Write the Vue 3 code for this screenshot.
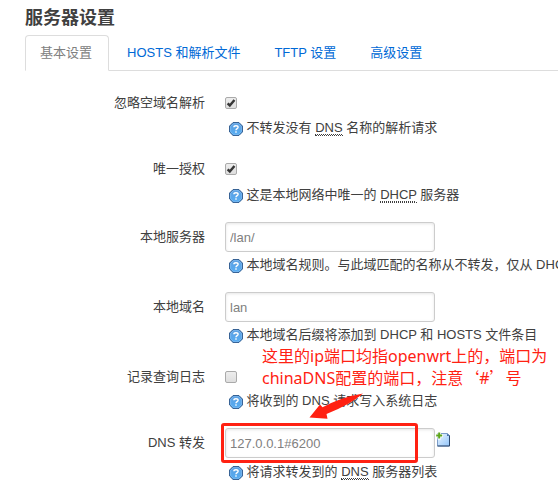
<script setup>
const tabs = ['基本设置', 'HOSTS 和解析文件', 'TFTP 设置', '高级设置']
const rows = [
  { id: 'strip', label: '忽略空域名解析', type: 'check', checked: true, hint: [['不转发没有 '], ['DNS', true], [' 名称的解析请求']] },
  { id: 'auth', label: '唯一授权', type: 'check', checked: true, hint: [['这是本地网络中唯一的 '], ['DHCP', true], [' 服务器']] },
  { id: 'server', label: '本地服务器', type: 'text', value: '/lan/', hint: [['本地域名规则。与此域匹配的名称从不转发，仅从 DHCP']] },
  { id: 'domain', label: '本地域名', type: 'text', value: 'lan', hint: [['本地域名后缀将添加到 DHCP 和 HOSTS 文件条目']] },
  { id: 'log', label: '记录查询日志', type: 'check', checked: false, hint: [['将收到的 DNS 请求写入系统日志']] },
  { id: 'forward', label: 'DNS 转发', type: 'text', value: '127.0.0.1#6200', add: true, hint: [['将请求转发到的 '], ['DNS', true], [' 服务器列表']] },
]
</script>

<template>
  <main class="page">
    <h2 class="title">服务器设置</h2>
    <nav class="tabs">
      <a v-for="(t, i) in tabs" :key="t" class="tab" :class="{ active: i === 0 }">{{ t }}</a>
    </nav>
    <section class="form">
      <div v-for="r in rows" :key="r.id" class="row" :class="r.id">
        <label class="label">{{ r.label }}</label>
        <div class="field">
          <div class="control">
            <span v-if="r.type === 'check'" class="check">
              <svg v-if="r.checked" width="10" height="10" viewBox="0 0 11 11"><path d="M1.8 5.8 4.2 8.2 9.3 2.2" fill="none" stroke="#363636" stroke-width="2.7" /></svg>
            </span>
            <input v-else class="input" type="text" :value="r.value" />
            <svg v-if="r.add" class="add" width="16" height="16" viewBox="0 0 16 16">
              <defs><linearGradient id="paper" x1="0" y1="0" x2="1" y2="1"><stop offset="0" stop-color="#edf6ff" /><stop offset="1" stop-color="#92c5fa" /></linearGradient></defs>
              <path d="M1.5 1.5H11.5L13.5 3.5V14H1.5Z" fill="url(#paper)" stroke="#7b9cc8" />
              <path d="M13.5 3.5V14H1.5" fill="none" stroke="#2d486e" />
              <path d="M11 1.5V4H13.5Z" fill="#4c74a8" />
              <path d="M3.3 0V7.5M0 3.6H7" stroke="#fff" stroke-width="3.4" />
              <path d="M3.2 .6V6.6M.2 3.6H6.2" stroke="#5da51c" stroke-width="2" />
            </svg>
          </div>
          <div class="hint">
            <svg class="help" width="14" height="14" viewBox="0 0 14 14">
              <defs><linearGradient id="orb" x1="0" y1="0" x2="0" y2="1"><stop offset="0" stop-color="#5c9ee0" /><stop offset="1" stop-color="#55adf3" /></linearGradient></defs>
              <path d="M4 .6H10L13.4 4V10L10 13.4H4L.6 10V4Z" fill="url(#orb)" stroke="#2b578c" stroke-linejoin="round" />
              <path d="M4.5 1.6H9.5L12.4 4.5V9.5L9.5 12.4H4.5L1.6 9.5V4.5Z" fill="none" stroke="#8ec5f5" stroke-width=".6" />
              <path d="M4.9 5.2C4.9 3.2 9.1 3.2 9.1 5.2C9.1 6.7 7 6.5 7 8.3M7 9.3V10.7" fill="none" stroke="#fff" stroke-width="1.4" />
            </svg>
            <span class="hint-text"><template v-for="(p, i) in r.hint" :key="i"><abbr v-if="p[1]">{{ p[0] }}</abbr><template v-else>{{ p[0] }}</template></template></span>
          </div>
        </div>
      </div>
    </section>
    <div class="note">这里的ip端口均指openwrt上的，端口为<br />chinaDNS配置的端口，注意<span class="quote">‘</span>#<span class="quote">’</span>号</div>
    <svg class="arrow" width="56" height="28" viewBox="0 0 56 28"><path d="M.5 24.5 11 11.5 13.5 14.3Q32 4 54 .4Q41 11.5 17.5 21L18.5 25.8Z" fill="#ff2112" /></svg>
    <div class="frame"></div>
  </main>
</template>

<style>
body { margin: 0; background: #fff; overflow: hidden; }
</style>

<style scoped>
* { box-sizing: border-box; }
.page { position: relative; width: 558px; height: 487px; overflow: hidden; padding-left: 25px; color: #404040; font: 13px/20px "Liberation Sans", "Noto Sans CJK SC", sans-serif; }
.title { margin: 0; height: 35px; font-size: 18px; line-height: 36px; font-weight: bold; }
.tabs { display: flex; height: 36px; border-bottom: 1px solid #ddd; }
.tab { height: 36px; padding: 0 15px; margin-right: 2px; border: 1px solid transparent; line-height: 33px; color: #0069d6; white-space: pre; }
.tab.active { padding: 0 16px 0 14px; color: #808080; background: #fff; border-color: #ddd #ddd #fff; border-radius: 4px 4px 0 0; }
.form { padding-top: 17px; }
.row { display: flex; height: 70px; white-space: pre; }
.row.strip, .row.log { height: 66px; }
.row.auth { height: 68px; }
.label { width: 180px; line-height: 30px; text-align: right; flex: none; }
.field { margin-left: 20px; }
.control { display: flex; align-items: center; height: 30px; }
.check { width: 12px; height: 12px; border: 1px solid #aaa; border-radius: 2px; background: linear-gradient(#ededed, #dedede); display: flex; align-items: center; justify-content: center; flex: none; }
.input { width: 210px; height: 30px; padding: 0 4px; border: 1px solid #ccc; border-radius: 3px; background: #fff; color: #808080; font: inherit; box-shadow: inset 0 1px 3px rgba(0, 0, 0, .1); outline: none; }
.add { margin: -6px 0 0 1px; }
.hint { display: flex; align-items: center; height: 20px; padding-left: 4px; margin-top: 3px; }
.strip .hint { margin-top: 0; }
.auth .hint { margin-top: 1px; }
.log .hint { margin-top: -1px; }
.forward .hint { margin-top: 4px; }
.help { margin: 1px 4px 0 -.5px; flex: none; }
abbr { border-bottom: 1px dotted #404040; text-decoration: underline dotted 1px; text-underline-offset: 2px; }
.note { position: absolute; left: 262px; top: 346px; color: #ff2112; font: 16px/21px "Noto Sans", "Noto Sans CJK SC", sans-serif; white-space: nowrap; }
.quote { font-family: "Noto Sans CJK SC", sans-serif; display: inline-block; width: 16px; }
.quote:first-of-type { text-align: right; }
.arrow { position: absolute; left: 309px; top: 393px; }
.frame { position: absolute; left: 221px; top: 423px; width: 197px; height: 40px; border: 3px solid #ff2112; border-radius: 3px; }
</style>
